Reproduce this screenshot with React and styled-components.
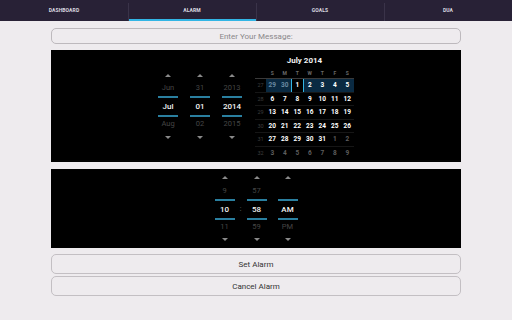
import React from 'react'
import styled, { createGlobalStyle } from 'styled-components'

const GlobalStyle = createGlobalStyle`
  html, body {
    margin: 0;
    padding: 0;
    background: #eeebee;
    font-family: Roboto, "Liberation Sans", sans-serif;
  }
  * { box-sizing: border-box; }
`

const Page = styled.div`
  display: flex;
  flex-direction: column;
  width: 512px;
  height: 320px;
  background: #eeebee;
  overflow: hidden;
`

const TabBar = styled.div`
  display: grid;
  grid-template-columns: repeat(4, 1fr);
  height: 21px;
  background: #282136;
`

const Tab = styled.div`
  position: relative;
  display: flex;
  align-items: center;
  justify-content: center;
  font-size: 5px;
  font-weight: 700;
  letter-spacing: 0.1px;
  color: #dcdae0;
  border-bottom: 2px solid ${({ $active }) => ($active ? '#33b5e5' : 'transparent')};
  &:not(:first-child)::before {
    content: '';
    position: absolute;
    left: 0;
    top: 3px;
    bottom: -2px;
    width: 1px;
    background: #3a3349;
  }
`

const Content = styled.div`
  display: flex;
  flex-direction: column;
  gap: 6px;
  padding: 7px 51px 0;
`

const MessageField = styled.div`
  height: 16px;
  border: 1px solid #bdb9bd;
  border-radius: 5px;
  display: flex;
  align-items: center;
  justify-content: center;
  font-size: 8px;
  color: #8a878a;
`

const Panel = styled.div`
  height: ${({ $height }) => $height}px;
  margin-top: ${({ $top }) => $top || 0}px;
  background: #000;
  display: flex;
  justify-content: center;
  align-items: center;
  gap: ${({ $gap }) => $gap || 0}px;
`

const Pickers = styled.div`
  display: flex;
  align-items: center;
  gap: ${({ $gap }) => $gap || 0}px;
`

const Column = styled.div`
  width: 20px;
  display: flex;
  flex-direction: column;
  align-items: stretch;
  margin-left: ${({ $offset }) => $offset || 0}px;
`

const Arrow = styled.div`
  height: 12px;
  display: flex;
  align-items: center;
  justify-content: center;
  &::after {
    content: '';
    width: 0;
    height: 0;
    border-left: 3px solid transparent;
    border-right: 3px solid transparent;
    ${({ $down }) => ($down ? 'border-top: 3px solid #8a8a8a;' : 'border-bottom: 3px solid #8a8a8a;')}
  }
`

const Value = styled.div`
  height: 14px;
  line-height: 14px;
  text-align: center;
  font-size: 7.5px;
  color: #464646;
`

const Selected = styled.div`
  margin-top: 1px;
  height: 21px;
  border-top: 2px solid #2a7f9f;
  border-bottom: 2px solid #2a7f9f;
  display: flex;
  align-items: center;
  justify-content: center;
  font-size: 8px;
  font-weight: 500;
  color: #f4f4f4;
`

const Colon = styled.div`
  width: 12px;
  text-align: center;
  font-size: 7px;
  color: #777;
`

const Calendar = styled.div`
  width: 99px;
  align-self: flex-start;
  margin-top: 4px;
  display: flex;
  flex-direction: column;
`

const Title = styled.div`
  height: 13px;
  line-height: 13px;
  text-align: center;
  font-size: 8px;
  font-weight: 700;
  color: #f2f2f2;
`

const CalRow = styled.div`
  display: grid;
  grid-template-columns: 11px repeat(7, 12.5px);
  height: ${({ $h }) => $h}px;
  border-bottom: 1px solid ${({ $line }) => $line || '#141414'};
`

const WeekDays = styled.div`
  grid-column: 2 / span 7;
  display: grid;
  grid-template-columns: repeat(7, 12.5px);
  background: ${({ $highlight }) => ($highlight ? '#0a2a42' : 'transparent')};
`

const HeadCell = styled.div`
  display: flex;
  align-items: center;
  justify-content: center;
  font-size: 5px;
  font-weight: 700;
  color: #6a6a6a;
`

const WeekNo = styled.div`
  display: flex;
  align-items: center;
  justify-content: center;
  font-size: 5.5px;
  color: #3f3f3f;
`

const dayColor = { prev: '#6a8ba3', cur: '#ffffff', next: '#5e5e5e' }

const Day = styled.div`
  display: flex;
  align-items: center;
  justify-content: center;
  font-size: 6.5px;
  font-weight: 700;
  color: ${({ $kind }) => dayColor[$kind]};
  ${({ $selected }) => $selected && `
    background: #000;
    border-left: 1.5px solid #33b5e5;
    border-right: 1.5px solid #33b5e5;
  `}
`

const ButtonGroup = styled.div`
  display: flex;
  flex-direction: column;
  gap: 2px;
`

const Button = styled.div`
  height: 20px;
  border: 1px solid #c3bfc3;
  border-radius: 5px;
  display: flex;
  align-items: center;
  justify-content: center;
  font-size: 8px;
  color: #333;
`

function Spinner({ prev, value, next, offset }) {
  return (
    <Column $offset={offset}>
      <Arrow />
      <Value>{prev}</Value>
      <Selected>{value}</Selected>
      <Value>{next}</Value>
      <Arrow $down />
    </Column>
  )
}

const weeks = [
  { no: 27, highlight: true, days: [[29, 'prev'], [30, 'prev'], [1, 'cur', true], [2, 'cur'], [3, 'cur'], [4, 'cur'], [5, 'cur']] },
  { no: 28, days: [6, 7, 8, 9, 10, 11, 12].map(d => [d, 'cur']) },
  { no: 29, days: [13, 14, 15, 16, 17, 18, 19].map(d => [d, 'cur']) },
  { no: 30, days: [20, 21, 22, 23, 24, 25, 26].map(d => [d, 'cur']) },
  { no: 31, days: [[27, 'cur'], [28, 'cur'], [29, 'cur'], [30, 'cur'], [31, 'cur'], [1, 'next'], [2, 'next']] },
  { no: 32, days: [3, 4, 5, 6, 7, 8, 9].map(d => [d, 'next']) },
]

const tabs = ['DASHBOARD', 'ALARM', 'GOALS', 'DUA']

export default function App() {
  return (
    <Page>
      <GlobalStyle />
      <TabBar>
        {tabs.map(t => (
          <Tab key={t} $active={t === 'ALARM'}>{t}</Tab>
        ))}
      </TabBar>

      <Content>
        <MessageField>Enter Your Message:</MessageField>

        <Panel $height={112} $gap={13}>
          <Pickers $gap={12}>
            <Spinner prev="Jun" value="Jul" next="Aug" />
            <Spinner prev="31" value="01" next="02" />
            <Spinner prev="2013" value="2014" next="2015" />
          </Pickers>

          <Calendar>
            <Title>July 2014</Title>
            <CalRow $h={12} $line="#3a3a3a">
              <span />
              {['S', 'M', 'T', 'W', 'T', 'F', 'S'].map((d, i) => (
                <HeadCell key={i}>{d}</HeadCell>
              ))}
            </CalRow>
            {weeks.map((w, idx) => (
              <CalRow key={w.no} $h={13.5} $line={idx === weeks.length - 1 ? 'transparent' : '#161616'}>
                <WeekNo>{w.no}</WeekNo>
                <WeekDays $highlight={w.highlight}>
                  {w.days.map(([d, kind, sel], i) => (
                    <Day key={i} $kind={kind} $selected={sel}>{d}</Day>
                  ))}
                </WeekDays>
              </CalRow>
            ))}
          </Calendar>
        </Panel>

        <Panel $height={79} $top={1}>
          <Pickers>
            <Spinner prev="9" value="10" next="11" />
            <Colon>:</Colon>
            <Spinner prev="57" value="58" next="59" />
            <Spinner prev="" value="AM" next="PM" offset={11} />
          </Pickers>
        </Panel>

        <ButtonGroup>
          <Button>Set Alarm</Button>
          <Button>Cancel Alarm</Button>
        </ButtonGroup>
      </Content>
    </Page>
  )
}
